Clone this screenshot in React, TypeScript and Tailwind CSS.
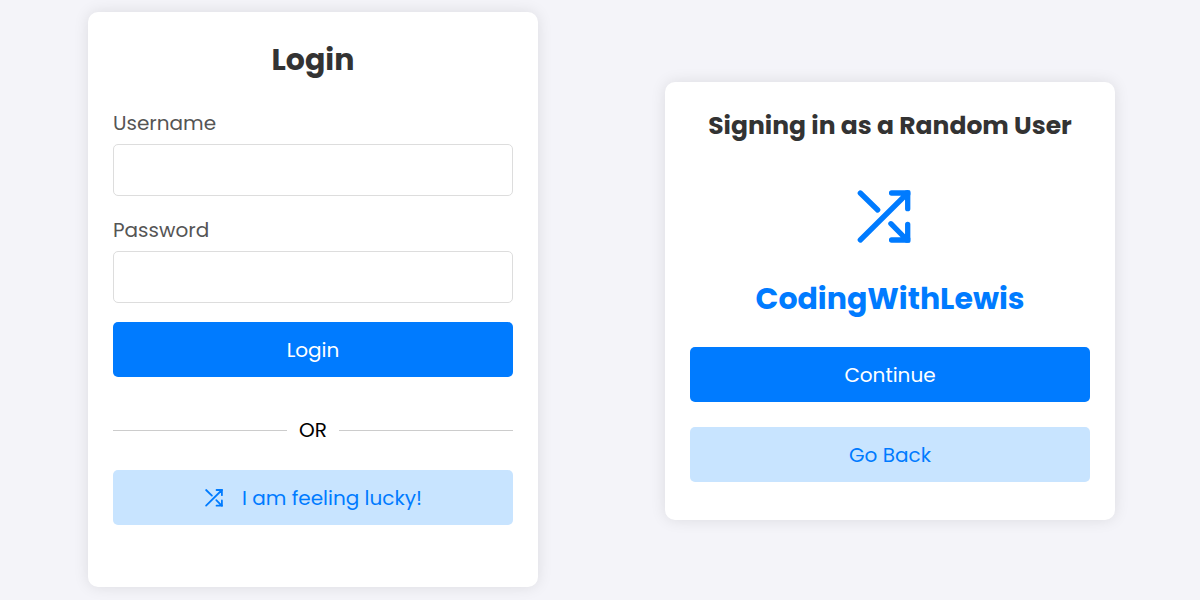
import React from "react";

function ShuffleIcon({ className }: { className: string }) {
  return (
    <svg className={className} viewBox="0 0 60 60" fill="none" stroke="currentColor" strokeWidth="5.3" strokeLinecap="round" strokeLinejoin="round" aria-hidden="true">
      <path d="M37.6 6H53.700V21.700M53.700 6L6.300 53M6.300 6L23.700 23M53.700 37.300V53H37.600M53 53L36.900 36.700" />
      <g fill="currentColor" stroke="none">
        <rect x="51" y="3.35" width="5.35" height="5.3" rx="1.2" />
        <rect x="51" y="50.35" width="5.35" height="5.3" rx="1.2" />
      </g>
    </svg>
  );
}

const button = "flex h-[55px] w-full items-center justify-center rounded-[5px] text-xl";
const solid = button + " bg-[#007bff] text-white";
const soft = button + " bg-[#c8e4ff] text-[#007bff]";
const card = "w-full max-w-[450px] rounded-[10px] bg-white px-[25px] shadow-[0_0_15px_rgba(0,0,0,0.1)]";

function Field({ id, label, type }: { id: string; label: string; type: string }) {
  return (
    <div>
      <label htmlFor={id} className="block text-xl leading-[30px] text-[#555]">{label}</label>
      <input id={id} type={type} className="mt-1.5 block h-[52px] w-full rounded-[5px] border border-[#ddd] px-3 text-xl" />
    </div>
  );
}

export default function App() {
  return (
    <main className="flex min-h-screen flex-wrap items-center justify-center gap-[127px] bg-[#f4f4f9] pt-3 pr-[85px] pb-2.5 pl-[88px] font-[Poppins,Inter,sans-serif] lg:flex-nowrap">
      <form className={card + " pt-6 pb-[62px] lg:self-start"} onSubmit={(e) => e.preventDefault()}>
        <h1 className="text-center text-3xl leading-[48px] font-bold text-[#333]">Login</h1>
        <div className="mt-6 flex flex-col gap-[19px]">
          <Field id="username" label="Username" type="text" />
          <Field id="password" label="Password" type="password" />
          <button type="submit" className={solid}>Login</button>
        </div>
        <div className="mt-[38px] flex items-center gap-3 text-xl leading-[30px] text-black">
          <span className="h-px flex-1 bg-[#ccc]" />
          OR
          <span className="h-px flex-1 bg-[#ccc]" />
        </div>
        <button type="button" className={soft + " mt-[25px] gap-[18px]"}>
          <ShuffleIcon className="size-5" />
          I am feeling lucky!
        </button>
      </form>
      <section className={card + " pt-6 pb-[38px]"}>
        <h2 className="text-center text-[25px] leading-[40px] font-bold text-[#333]">Signing in as a Random User</h2>
        <div className="mt-[41px] flex justify-center pr-3 text-[#007bff]">
          <ShuffleIcon className="size-[60px]" />
        </div>
        <p className="mt-7 text-center text-3xl leading-[48px] font-bold text-[#007bff]">CodingWithLewis</p>
        <button type="button" className={solid + " mt-6"}>Continue</button>
        <button type="button" className={soft + " mt-[25px]"}>Go Back</button>
      </section>
    </main>
  );
}
